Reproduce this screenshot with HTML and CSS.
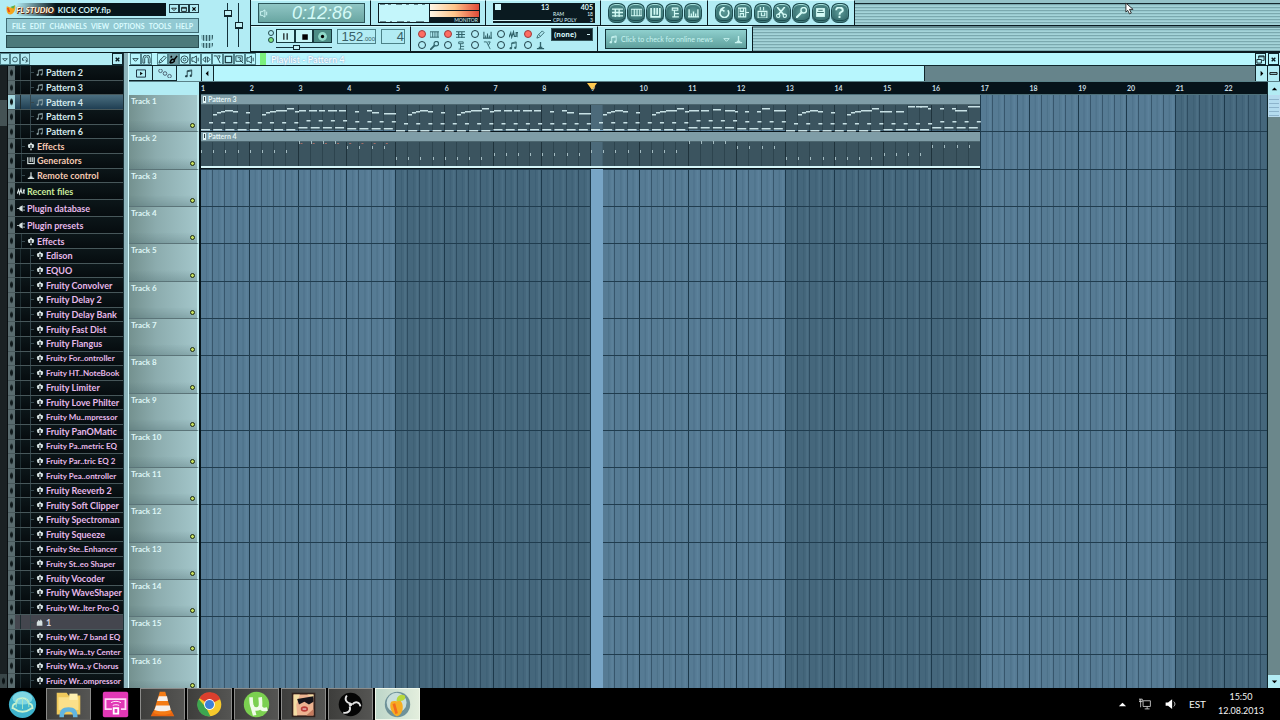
FILE: index.html
```
<!DOCTYPE html>
<html lang="en">
<head>
	<meta charset="UTF-8">
	<title>FL Studio</title>
	<link rel="stylesheet" href="styles.css">
</head>
<body>
	<svg class="symbols" aria-hidden="true">
		<symbol id="note" viewBox="0 0 10 10"><path d="M3 8V2l5-1v6M3 3l5-1" fill="none" stroke="currentColor"/><circle cx="2" cy="8" r="1.3" fill="currentColor"/><circle cx="7" cy="7.5" r="1.3" fill="currentColor"/></symbol>
		<symbol id="plug" viewBox="0 0 10 10"><path d="M4 0h2v2H4zM2 2h6l1 2-1 3H6v3H4V7H2L1 4z" fill="currentColor"/><path d="M5 3v5" stroke="#0b1216" stroke-width="1.500"/></symbol>
		<symbol id="keys" viewBox="0 0 10 10"><path d="M1 1v8h8V1M4 1v6M6.500 1v6" fill="none" stroke="currentColor" stroke-width="1.500"/></symbol>
		<symbol id="remote" viewBox="0 0 10 10"><path d="M5 1v6M1 8.500h8M3 7h4" fill="none" stroke="currentColor" stroke-width="1.500"/></symbol>
		<symbol id="wave" viewBox="0 0 10 10"><path d="M0 8l2-5 1 5 2-6 1 5h2V3h2v5" fill="none" stroke="currentColor" stroke-width="1.300"/></symbol>
		<symbol id="jack" viewBox="0 0 10 10"><path d="M0 5h4M7 3h3M7 7h3" stroke="currentColor"/><path d="M7 1v8L3 7V3z" fill="currentColor"/></symbol>
		<symbol id="hand" viewBox="0 0 10 10"><path d="M1 9V5l2-3 2 1 1-2 2 3v5z" fill="currentColor"/></symbol>
		<symbol id="down" viewBox="0 0 10 10"><path d="M2 4h6L5 7z" fill="none" stroke="currentColor"/></symbol>
		<symbol id="magnet" viewBox="0 0 10 10"><path d="M1 9V4a4 4 0 0 1 8 0v5H7V4a2 2 0 0 0-4 0v5z" fill="none" stroke="currentColor"/></symbol>
		<symbol id="pencil" viewBox="0 0 10 10"><path d="M1 9l1-3 5-5 2 2-5 5zM3 5l2 2" fill="none" stroke="currentColor"/></symbol>
		<symbol id="brush" viewBox="0 0 10 10"><path d="M9 1L6 5M1 9c1-3 2-5 4-4s1 4-4 4M3 1L2 3" fill="none" stroke="currentColor" stroke-width="1.700"/></symbol>
		<symbol id="mute" viewBox="0 0 10 10"><circle cx="5" cy="5" r="4" fill="none" stroke="currentColor"/><circle cx="5" cy="5" r="1.500" fill="none" stroke="currentColor"/></symbol>
		<symbol id="ring" viewBox="0 0 10 10"><circle cx="5" cy="5" r="3" fill="none" stroke="currentColor"/></symbol>
		<symbol id="reload" viewBox="0 0 10 10"><path d="M2 6a3 3 0 1 1 5 1h2M6 5l1 2-1 2M2 3v3h2" fill="none" stroke="currentColor"/></symbol>
		<symbol id="speaker" viewBox="0 0 10 10"><path d="M1 3h2l3-2v8L3 7H1zM8 3v4" fill="none" stroke="currentColor"/></symbol>
		<symbol id="slip" viewBox="0 0 10 10"><path d="M4 2v6L1 5zM6 2v6l3-3z" fill="none" stroke="currentColor"/></symbol>
		<symbol id="slice" viewBox="0 0 10 10"><path d="M1 1h3l4 8M5 1h3L6 5" fill="none" stroke="currentColor"/></symbol>
		<symbol id="select" viewBox="0 0 10 10"><rect x="1.500" y="1.500" width="7" height="7" fill="none" stroke="currentColor" stroke-width="1.500"/></symbol>
		<symbol id="zoomer" viewBox="0 0 10 10"><path d="M1 1h7v6H1zM5 5l4 4M3 3h3v2" fill="none" stroke="currentColor"/></symbol>
		<symbol id="cross" viewBox="0 0 10 10"><path d="M3 3l4 4M7 3L3 7" stroke="currentColor" stroke-width="1.500"/></symbol>
		<symbol id="max" viewBox="0 0 10 10"><path d="M2 3h6v5H2zM2 4h6" fill="none" stroke="currentColor"/></symbol>
		<symbol id="restore" viewBox="0 0 10 10"><path d="M1 5h5v4H1zM3 4V1h6v5H7M3 2h6" fill="none" stroke="currentColor"/></symbol>
		<symbol id="step" viewBox="0 0 10 10"><path d="M0 2h10M0 5h10M0 8h10M3 2v7M6.500 2v7" stroke="currentColor" stroke-width="1.200"/></symbol>
		<symbol id="piano" viewBox="0 0 10 10"><path d="M0 2h10v6H0zM3 2v6M5.500 2v6M8 2v6" fill="none" stroke="currentColor"/></symbol>
		<symbol id="tree" viewBox="0 0 10 10"><path d="M3 1h5v2H3zM5 3v6M5 6h4M3 9h6" fill="none" stroke="currentColor"/></symbol>
		<symbol id="mixer" viewBox="0 0 10 10"><path d="M1 9V2M3 9V6M5 9V4M7 9V6M9 9V2M0 9h10" stroke="currentColor" stroke-width="1.200"/></symbol>
		<symbol id="undo" viewBox="0 0 10 10"><path d="M3 2a4 4 0 1 0 5 1M5 0L2 2l3 2" fill="none" stroke="currentColor" stroke-width="1.500"/></symbol>
		<symbol id="disk" viewBox="0 0 10 10"><path d="M0 1h7v8H0zM2 1v3h3V1M2 9V6h3v3M7 5h3" fill="none" stroke="currentColor"/></symbol>
		<symbol id="render" viewBox="0 0 10 10"><path d="M3 0v3M6 0v3M1 4h8v6H1zM4 5v3h3V5" fill="none" stroke="currentColor"/></symbol>
		<symbol id="cut" viewBox="0 0 10 10"><path d="M1 0l6 7M8 0L2 7" stroke="currentColor" stroke-width="1.500"/><circle cx="2" cy="8" r="1.500" fill="none" stroke="currentColor"/><circle cx="8" cy="8" r="1.500" fill="none" stroke="currentColor"/></symbol>
		<symbol id="mic" viewBox="0 0 10 10"><path d="M0 10l5-5" stroke="currentColor" stroke-width="2"/><circle cx="7" cy="3" r="2.500" fill="none" stroke="currentColor" stroke-width="1.300"/></symbol>
		<symbol id="info" viewBox="0 0 10 10"><path d="M1 1h8v8H1z" fill="currentColor"/><path d="M3 3h4M2 5h6" stroke="#38706f"/></symbol>
		<symbol id="help" viewBox="0 0 10 10"><path d="M2 3c0-4 6-3 6 0 0 2-3 1-3 4M5 8v2" fill="none" stroke="currentColor" stroke-width="1.800"/></symbol>
	</svg>

	<header class="toolbar">
		<section class="main-panel">
			<div class="title">
				<svg class="fruit" viewBox="0 0 12 14"><path d="M1 3l5 2 5-3c1 6-2 11-6 11S0 7 1 3z" fill="#f5a51c"/><path d="M5 4l6-2-2 4z" fill="#54b04c"/><path d="M2 5l2 5" stroke="#e8481d" stroke-width="2"/></svg>
				<b class="brand">FL STUDIO</b>
				<span>KICK COPY.flp</span>
				<div class="win-buttons">
					<button aria-label="Minimize"><svg viewBox="0 0 10 10"><use href="#down"/></svg></button>
					<button aria-label="Restore"><svg viewBox="0 0 10 10"><use href="#max"/></svg></button>
					<button aria-label="Close"><svg viewBox="0 0 10 10"><use href="#cross"/></svg></button>
				</div>
			</div>
			<nav class="menu">
				<a href="#file">FILE</a><a href="#edit">EDIT</a><a href="#channels">CHANNELS</a><a href="#view">VIEW</a><a href="#options">OPTIONS</a><a href="#tools">TOOLS</a><a href="#help-menu">HELP</a>
			</nav>
			<div class="hint"></div>
			<div class="knobs"><i></i><i></i></div>
			<div class="main-sliders">
				<input type="range" class="vslider" aria-label="Main volume" value="80">
				<input type="range" class="vslider" aria-label="Main pitch" value="50">
			</div>
		</section>

		<div class="rows">
			<div class="row">
				<section class="panel time"><div class="lcd"><svg viewBox="0 0 10 10"><use href="#speaker"/></svg><output>0:12:86</output></div></section>
				<section class="panel scope">
					<svg viewBox="0 0 102 20" preserveAspectRatio="none">
						<defs><linearGradient id="heat"><stop offset="0" stop-color="#fff7e6"/><stop offset=".5" stop-color="#ffc58a"/><stop offset="1" stop-color="#e04a38"/></linearGradient></defs>
						<rect width="102" height="20" fill="#0b1a20"/>
						<rect x="1" y="1" width="50" height="18" fill="#c4f6fb"/>
						<path d="M2 1h5m3 0h3m5 0h6m4 0h3m5 0h4m4 0h3M2 19h6m4 0h2m5 0h7m3 0h3m6 0h8" fill="none" stroke="#0b1a20"/>
						<rect x="52" y="1" width="49" height="6" fill="url(#heat)"/>
						<rect x="52" y="8" width="49" height="6" fill="url(#heat)"/>
					</svg>
					<span class="scope-label">MONITOR</span>
				</section>
				<section class="panel meter">
					<div class="song-pos"><i></i><b>13</b></div>
					<div class="cpu"><b>405</b><span>RAM <em>18</em></span><span>CPU POLY <em>3</em></span></div>
				</section>
				<section class="panel rounds views" data-icons="step,piano,keys,tree,mixer"></section>
				<section class="panel rounds files" data-icons="undo,disk,render,cut,mic,info,help"></section>
				<div class="stripes"></div>
			</div>
			<div class="row">
				<section class="panel transport">
					<div class="mode"><i></i><i class="lit"></i></div>
					<div class="play">
						<div class="play-buttons">
							<button aria-label="Pause"><svg viewBox="0 0 10 10"><path d="M3 2h1v6H3zM6 2h1v6H6z"/></svg></button>
							<button aria-label="Stop"><svg viewBox="0 0 10 10"><path d="M3 3h5v5H3z"/></svg></button>
							<button class="rec" aria-label="Record"><svg viewBox="0 0 10 10"><circle cx="5" cy="5" r="4" fill="#8fd9c9"/><circle cx="5" cy="5" r="1.500"/></svg></button>
						</div>
						<input type="range" class="hslider" aria-label="Song position" value="34">
					</div>
					<output class="tempo">152<small>.000</small></output>
					<output class="pat">4</output>
				</section>
				<section class="panel snap">
					<div class="switches"></div>
					<select aria-label="Snap"><option>(none)</option></select>
				</section>
				<section class="panel online">
					<div class="news"><svg viewBox="0 0 10 10"><use href="#note"/></svg><span>Click to check for online news</span><svg viewBox="0 0 10 10"><use href="#down"/></svg><svg class="get" viewBox="0 0 10 10"><use href="#remote"/></svg></div>
				</section>
				<div class="stripes"></div>
			</div>
		</div>
	</header>

	<main class="desk">
		<aside class="browser">
			<div class="bar">
				<div class="tools" data-icons="down,ring,reload"></div>
				<button class="close" aria-label="Close browser"><svg viewBox="0 0 10 10"><use href="#cross"/></svg></button>
			</div>
			<div class="browser-body">
				<div class="browser-scroll"><i></i><b></b></div>
				<ul class="items"></ul>
			</div>
		</aside>

		<section class="playlist">
			<div class="bar">
				<div class="tools" data-icons="down,magnet"></div>
				<div class="tools paint" data-icons="pencil,brush,mute,speaker,slip,slice,select,zoomer,speaker"></div>
				<i class="green"></i>
				<h1>Playlist - Pattern 4</h1>
				<button class="close" aria-label="Restore playlist"><svg viewBox="0 0 10 10"><use href="#restore"/></svg></button>
				<button class="close" aria-label="Close playlist"><svg viewBox="0 0 10 10"><use href="#cross"/></svg></button>
			</div>
			<div class="sub">
				<div class="tabs">
					<button aria-label="Picker"><svg viewBox="0 0 20 10"><path d="M5 1h10v8H5z" fill="none" stroke="#123"/><path d="M9 3l3 2-3 2z"/></svg></button>
					<button aria-label="Links"><svg viewBox="0 0 20 10"><circle cx="5" cy="2" r="2" fill="none" stroke="#456"/><circle cx="10" cy="5" r="2" fill="none" stroke="#456"/><circle cx="15" cy="8" r="2" fill="none" stroke="#456"/></svg></button>
					<button aria-label="Patterns"><svg viewBox="0 0 10 10"><use href="#note"/></svg></button>
				</div>
				<div class="hscroll">
					<button aria-label="Scroll left"><svg viewBox="0 0 10 10"><path d="M6 2v6L3 5z"/></svg></button>
					<div class="rail"><i></i></div>
					<button aria-label="Scroll right"><svg viewBox="0 0 10 10"><path d="M4 2v6l3-3z"/></svg></button>
				</div>
				<button class="zoom-out" aria-label="Zoom"><svg viewBox="0 0 10 10"><path d="M1 4h8v2H1z" fill="none" stroke="#000"/></svg></button>
			</div>
			<div class="arrange">
				<ol class="tracks"></ol>
				<div class="song">
					<ol class="ruler"></ol>
					<div class="grid">
						<svg class="lanes" viewBox="0 0 1066 597" preserveAspectRatio="none"></svg>
						<span class="clip-name first">Pattern 3</span>
						<span class="clip-name second">Pattern 4</span>
					</div>
				</div>
				<div class="vscroll">
					<button aria-label="Scroll up"><svg viewBox="0 0 10 10"><path d="M2 7h6L5 4z"/></svg></button>
					<div class="rail"><i></i></div>
					<button aria-label="Scroll down"><svg viewBox="0 0 10 10"><path d="M2 4h6L5 7z"/></svg></button>
				</div>
			</div>
		</section>
	</main>

	<footer class="taskbar">
		<button class="start" aria-label="Start"><svg viewBox="0 0 32 32"><circle cx="16" cy="16" r="15" fill="#3fb3cc"/><ellipse cx="16" cy="9" rx="11" ry="7" fill="#7fd6e2"/><path d="M5 20c0-4 2-5 4-5 0-4 3-6 7-6s7 3 7 6c3 0 4 2 4 5-3 0-3 4-11 4S8 20 5 20z" fill="none" stroke="#c9f2ce" stroke-width="2"/><path d="M9 19c0-5 1-7 3-9M16 21V9M23 19c0-5-1-7-3-9" fill="none" stroke="#a9e6c4"/></svg></button>
		<button class="task" aria-label="Explorer"><svg viewBox="0 0 32 32"><path d="M3 3h11l2 3h13v21H3z" fill="#f0c95c"/><path d="M5 8h22v14H5z" fill="#fbe08a"/><path d="M17 4h9v7h-9z" fill="#fff0b0"/><path d="M6 30c0-8 3-11 10-11s10 3 10 11h-5c0-4-1-6-5-6s-5 2-5 6z" fill="#62b5e0"/></svg></button>
		<button class="task plain" aria-label="Connect"><svg viewBox="0 0 32 32"><rect x="2" y="2" width="28" height="28" rx="2" fill="#e238b6"/><path d="M12 21H5V10h22v11h-5" fill="none" stroke="#ffd8f6" stroke-width="2"/><path d="M14 20h5v6h-5z" fill="none" stroke="#fff" stroke-width="2"/><path d="M11 14c3-2 8-2 11 0M13 17c2-1 5-1 7 0" fill="none" stroke="#fff"/></svg></button>
		<button class="task" aria-label="VLC"><svg viewBox="0 0 32 32"><path d="M6 23h20l3 6H3z" fill="#e8640f"/><path d="M13 2h6l7 23c-5 3-15 3-20 0z" fill="#f47b14"/><path d="M12 7h9l1 5H10zM9 17h15l1 5c-5 2-13 2-18 0z" fill="#f4f0ec"/></svg></button>
		<button class="task" aria-label="Chrome"><svg viewBox="0 0 32 32"><circle cx="16" cy="16" r="13" fill="#f6c92c"/><path d="M16 16L5 9a13 13 0 0 1 23 1z" fill="#dc3f2e"/><path d="M4 10l8 9 5 10A13 13 0 0 1 4 10z" fill="#3da650"/><circle cx="16" cy="16" r="6" fill="#fff"/><circle cx="16" cy="16" r="5" fill="#3e80d8"/></svg></button>
		<button class="task" aria-label="uTorrent"><svg viewBox="0 0 32 32"><circle cx="16" cy="16" r="14" fill="#7bd050"/><path d="M10 8c0 9 1 13 6 13s5-4 4-13M20 17c1 5 4 5 8 4M11 17l3 11" fill="none" stroke="#effbe8" stroke-width="4"/></svg></button>
		<button class="task" aria-label="Picture"><svg viewBox="0 0 32 32"><path d="M3 3h26v27H3z" fill="#30201c"/><path d="M5 5h22v23H5z" fill="#edb391"/><path d="M5 5h7L8 16l1 12H5zM20 5h7v4z" fill="#f4dea4"/><path d="M9 10l18-3v6l-5 3-5-3-6 3z" fill="#17151b"/><ellipse cx="17" cy="21" rx="4" ry="3" fill="#b93d38"/><path d="M15 21h4" stroke="#fff"/><path d="M19 28l8-7v7z" fill="#c4795d"/></svg></button>
		<button class="task" aria-label="OBS"><svg viewBox="0 0 32 32"><circle cx="16" cy="16" r="13" fill="#050505"/><path d="M16 15c-5-1-7-5-4-9M18 16c3-4 8-3 9 2M15 18c2 5-2 8-7 7" fill="none" stroke="#e4e4e4" stroke-width="2"/><circle cx="16" cy="16" r="2" fill="#e4e4e4"/></svg></button>
		<button class="task active" aria-label="FL Studio"><svg viewBox="0 0 32 32"><circle cx="16" cy="16" r="14" fill="#6f9299"/><circle cx="15" cy="14" r="11" fill="#c8dedb"/><path d="M9 13c4-2 6 1 9-2 6 3 5 17-3 18-5-2-9-11-6-16z" fill="#f6ad22"/><path d="M12 15l3 11" stroke="#f36c1e" stroke-width="3"/><path d="M15 12c0-5 4-8 9-6 2 4-2 7-9 6z" fill="#b9d83b"/></svg></button>
		<div class="tray">
			<svg viewBox="0 0 10 10"><path d="M1 7h8L5 3z" fill="#fff"/></svg>
			<svg class="net" viewBox="0 0 16 14"><path d="M5 3h9v7H5zM7 13h6M10 10v3M2 1v10M0 1h4v3H0z" fill="none" stroke="#ddd"/></svg>
			<svg class="net" viewBox="0 0 16 14"><path d="M2 5h3l5-4v12L5 9H2z" fill="#fff"/><path d="M12 4c2 2 2 4 0 6" fill="none" stroke="#ddd"/></svg>
			<span>EST</span>
			<time datetime="2013-08-12T15:50">15:50<br>12.08.2013</time>
		</div>
	</footer>
	<svg class="cursor" viewBox="0 0 10 14"><path d="M1 1v10l2-2 2 4 2-1-2-4h4z" fill="#fff" stroke="#222"/></svg>
	<script src="script.js"></script>
</body>
</html>
```
FILE: styles.css
```
*{
	margin: 0;
	padding: 0;
	box-sizing: border-box;
}
body{
	height: 100vh;
	display: flex;
	flex-direction: column;
	overflow: hidden;
	background: #000;
	font-family: Lato, sans-serif;
	font-size: 9px;
}
button{
	border: 0;
	background: none;
	display: flex;
	align-items: center;
	justify-content: center;
	color: #24434b;
}
ul,ol{
	list-style: none;
}
.symbols{
	display: none;
}

/* toolbar */
.toolbar{
	flex: none;
	height: 53px;
	display: flex;
	background: #b2ecf4;
	border-bottom: 1px solid #0a1a20;
}
.main-panel{
	width: 251px;
	flex: none;
	padding: 3px 6px;
	display: grid;
	grid-template-columns: 193px 12px 1fr;
	grid-template-rows: 13px 15px 13px;
	row-gap: 2px;
	column-gap: 2px;
	border-right: 1px solid #0a1a20;
}
.title,.menu,.hint{
	grid-column: 1;
}
.title{
	display: flex;
	align-items: center;
	color: #cfeef2;
	font-size: 8px;
	font-weight: bold;
	background: linear-gradient(90deg, #b2ecf4 10px, #07151a 50px);
}
.title>span{
	flex: 1;
	margin-left: 4px;
}
.fruit{
	width: 10px;
	height: 13px;
}
.brand{
	font-style: italic;
	font-size: 8px;
	color: #fdf4dc;
	text-shadow: 0 0 1px #5b2610, 1px 1px 0 #5b2610;
}
.win-buttons{
	display: flex;
	height: 13px;
	padding: 1px 0 3px 3px;
	background: #b2ecf4;
}
.win-buttons button{
	width: 10px;
	border: 1px solid #1d3a42;
	color: #000;
}
.win-buttons svg{
	width: 8px;
	height: 8px;
}
.menu{
	display: flex;
	align-items: center;
	justify-content: space-between;
	padding: 0 5px;
	background: #92c9d2;
	border: 1px solid #3f6d76;
}
.menu a{
	color: #dafcff;
	text-decoration: none;
	font-size: 7px;
	font-weight: bold;
}
.hint{
	background: #4c7a7b;
	border: 1px solid #264b50;
}
.knobs{
	grid-column: 2;
	grid-row: 3;
	display: flex;
	flex-direction: column;
	gap: 2px;
}
.knobs i{
	height: 6px;
	border-radius: 0 0 4px 4px;
	background: repeating-linear-gradient(90deg, #8fc4cb 0 2px, #345f67 2px 3px);
}
.main-sliders{
	grid-column: 3;
	grid-row: 1 / 4;
	display: flex;
	justify-content: space-between;
	padding: 0 1px 0 8px;
}
.vslider,.hslider{
	appearance: none;
	background: none;
}
.vslider{
	writing-mode: vertical-lr;
	direction: rtl;
	width: 9px;
	height: 44px;
	background: linear-gradient(#14323a, #14323a) center / 1px 100% no-repeat;
}
.vslider::-webkit-slider-thumb{
	appearance: none;
	width: 8px;
	height: 7px;
	background: #c3f2f6;
	border: 1px solid #12282e;
	border-bottom-width: 2px;
}
.rows{
	flex: 1;
	min-width: 0;
}
.row{
	display: flex;
	height: 26px;
	border-bottom: 1px solid #0a1a20;
}
.panel{
	flex: none;
	display: flex;
	align-items: center;
	padding: 0 5px 0 7px;
	border-right: 1px solid #0a1a20;
	border-top: 1px solid #d4fbff;
}
.stripes{
	flex: 1;
	background: repeating-linear-gradient(#a5d4d9 0 1px, #7ba9af 1px 2px, #9acad0 2px 3px);
	border-top: 2px solid #638a90;
}
.row:first-child .stripes{
	border-top: 3px solid #94c2c8;
	box-shadow: inset 0 1px #14282e;
}
.time{
	width: 120px;
}
.lcd{
	flex: 1;
	height: 20px;
	display: flex;
	align-items: center;
	background: linear-gradient(#90c6c5, #69a6a2);
	border: 1px solid #2c565a;
	color: #d4fbf8;
}
.lcd svg{
	width: 10px;
	height: 9px;
}
.lcd output{
	flex: 1;
	padding-left: 23px;
	font: italic 18px/18px "Liberation Sans", sans-serif;
}
.scope{
	width: 115px;
	position: relative;
}
.scope>svg{
	width: 100%;
	height: 20px;
}
.scope-label{
	position: absolute;
	right: 7px;
	bottom: 2px;
	font-size: 5px;
	color: #cdeff2;
}
.meter{
	width: 115px;
	color: #dff8fa;
	line-height: 7px;
}
.song-pos{
	flex: 1;
	height: 20px;
	display: flex;
	justify-content: space-between;
	background: #0a1a20;
	border-bottom: 2px solid #0a1a20;
	padding: 1px 2px;
	box-shadow: inset 0 -1px #cdeff2;
}
.song-pos i{
	width: 6px;
	height: 6px;
	background: #cdf6fa;
}
.song-pos b{
	font-size: 7px;
}
.cpu{
	width: 44px;
	height: 20px;
	padding: 0 2px;
	background: #0a1a20;
	font-size: 5px;
	text-align: right;
}
.cpu b,.cpu span{
	display: block;
	height: 6px;
	line-height: 6px;
}
.cpu b{
	height: 8px;
	line-height: 8px;
	font-size: 7px;
}
.cpu span{
	display: flex;
	justify-content: space-between;
}
.cpu em{
	font-style: normal;
}
.rounds{
	justify-content: space-between;
}
.views{
	width: 107px;
}
.files{
	width: 147px;
}
.rounds button{
	width: 18px;
	height: 20px;
	border-radius: 7px;
	border: 1px solid #1d4c50;
	border-bottom: 3px double #1d4c50;
	background: radial-gradient(#5c9b98, #2c6466);
	box-shadow: inset 0 1px 1px #aee9e4;
	color: #d3fbf6;
}
.rounds svg{
	width: 11px;
	height: 11px;
}
.transport{
	width: 160px;
	gap: 5px;
	padding-left: 17px;
}
.mode i{
	display: block;
	width: 6px;
	height: 6px;
	margin: 1px 0;
	border: 1px solid #234a4d;
	border-radius: 50%;
}
.mode .lit{
	background: #7ee37b;
}
.mode{
	margin-right: -3px;
	margin-bottom: 5px;
}
.play{
	width: 56px;
}
.play-buttons{
	display: flex;
}
.play-buttons button{
	flex: 1;
	height: 14px;
	margin-top: 2px;
	background: #c5f5f6;
	border: 1px solid #16383d;
}
.play-buttons .rec{
	background: #4d8d86;
}
.play-buttons svg{
	width: 11px;
	height: 11px;
}
.hslider{
	display: block;
	width: 56px;
	height: 8px;
	background: linear-gradient(#14323a, #14323a) center / 100% 1px no-repeat;
}
.hslider::-webkit-slider-thumb{
	appearance: none;
	width: 7px;
	height: 5px;
	background: #c3f2f6;
	border: 1px solid #12282e;
}
.tempo,.pat{
	height: 15px;
	margin-bottom: 6px;
	border: 1px solid #4c8288;
	text-align: right;
	font: 13px/13px "Liberation Sans", sans-serif;
	color: #386067;
}
.tempo{
	width: 39px;
}
.tempo small{
	font-size: 6px;
}
.pat{
	width: 24px;
}
.snap{
	width: 187px;
	gap: 1px;
	padding-right: 4px;
	align-items: flex-start;
}
.switches{
	flex: 1;
	display: grid;
	grid-template-columns: repeat(5, 1fr);
	row-gap: 1px;
	padding-top: 2px;
}
.switches label{
	display: flex;
	align-items: center;
	gap: 2px;
	height: 10px;
	color: #30636a;
}
.switches input{
	appearance: none;
	width: 8px;
	height: 8px;
	border: 1px solid #1e3f47;
	border-radius: 50%;
}
.switches input:checked{
	background: #ff6d62;
	border-color: #a03a3c;
}
.switches svg{
	width: 13px;
	height: 9px;
}
.snap select{
	appearance: none;
	width: 42px;
	height: 13px;
	margin-top: 1px;
	padding-left: 2px;
	border: 1px solid #35555a;
	font: bold 7px "Open Sans", sans-serif;
	color: #d8f7fa;
	background: linear-gradient(#d8f7fa, #d8f7fa) 35px 5px / 3px 1px no-repeat #0a1a20;
}
.online{
	width: 155px;
}
.news{
	flex: 1;
	min-width: 0;
	height: 20px;
	display: flex;
	align-items: center;
	gap: 3px;
	padding: 0 3px;
	background: linear-gradient(#8fd0ce, #5fa09d);
	border: 1px solid #14343a;
	color: #c8f4f1;
	font-size: 7px;
}
.news span{
	flex: 1;
	white-space: nowrap;
}
.news svg{
	flex: none;
	width: 9px;
	height: 9px;
}

/* windows */
.desk{
	flex: 1;
	min-height: 0;
	display: flex;
	background: #8db4bb;
}
.bar{
	flex: none;
	height: 13px;
	display: flex;
	align-items: center;
	gap: 2px;
	background: #b7f6fd;
	border-bottom: 1px solid #10262c;
}
.tools{
	display: flex;
}
.tools button,.close{
	width: 11px;
	height: 12px;
	border: 1px solid #53868e;
}
.tools svg,.close svg{
	width: 9px;
	height: 9px;
}
.close{
	border-color: #10262c;
	color: #0a1a20;
}
.browser{
	width: 124px;
	flex: none;
	display: flex;
	flex-direction: column;
	border-right: 1px solid #1b3239;
}
.browser .bar{
	justify-content: space-between;
	background: #b2ecf4;
}
.browser .tools button{
	width: 10px;
}
.browser-body{
	flex: 1;
	min-height: 0;
	display: flex;
	overflow: hidden;
	background: #0d1518;
}
.browser-scroll{
	width: 8px;
	padding-top: 34px;
	background: #1a2123;
	border-right: 1px solid #090e10;
	display: flex;
	flex-direction: column;
	justify-content: space-between;
}
.browser-scroll i{
	height: 26px;
	background: #445254;
}
.browser-scroll b{
	height: 14px;
	background: radial-gradient(#0b1214 1px, transparent 2px), #394648;
}
.items{
	flex: 1;
	min-width: 0;
	margin-bottom: -1px;
	display: flex;
	flex-direction: column;
	font-weight: bold;
}
.items li{
	flex: 40 1 0;
	min-height: 0;
	display: flex;
	align-items: center;
	border-bottom: 1px solid #47575a;
	background: linear-gradient(#0c1619, #060c0f);
	color: #e6b9ea;
	white-space: nowrap;
}
.items li.big{
	flex-grow: 47;
}
.items li.tight{
	font-size: 8px;
}
.items li::before{
	content: "";
	flex: none;
	width: 7px;
	height: 100%;
	background: radial-gradient(#101a1c 1px, transparent 2px) center, #5a6c6f;
	margin-right: 1px;
}
.items .indent{
	flex: none;
	height: 100%;
}
.items .lvl0{
	width: 0;
}
.items .lvl1{
	width: 10px;
	background: linear-gradient(#2a3b40, #2a3b40) 5px 0 / 1px 100% no-repeat, linear-gradient(#35474d, #35474d) 6px center / 3px 1px no-repeat;
}
.items .lvl2{
	width: 19px;
	background: linear-gradient(#1e2d31, #1e2d31) 4px 0 / 1px 100% no-repeat, linear-gradient(#35474d, #35474d) 14px 0 / 1px 100% no-repeat, linear-gradient(#35474d, #35474d) 15px center / 3px 1px no-repeat;
}
.items svg{
	flex: none;
	width: 8px;
	height: 9px;
	margin: 0 2px 0 1px;
	color: #d6e2e2;
}
.items .music{
	color: #d6ebee;
}
.items .orange{
	color: #f5c9b2;
}
.items .green-text{
	color: #c8eb9b;
}
.items li.chosen{
	background: linear-gradient(#4b6f80, #203f53);
}
.items li.chosen::before{
	background-color: #a5d8e0;
}
.items li.folder{
	background: #44464e;
	color: #d9d6e2;
}
.items svg.note{
	color: #8ea3a6;
}

/* playlist */
.playlist{
	flex: 1;
	min-width: 0;
	margin-left: 4px;
	display: flex;
	flex-direction: column;
	border-left: 1px solid #d4fbff;
}
.playlist .bar{
	padding-right: 1px;
}
.playlist .tools{
	margin-left: 1px;
}
.playlist .paint{
	margin-left: 3px;
}
.paint button:nth-child(2){
	background: #6f9aa1;
	color: #000;
}
.green{
	width: 6px;
	height: 12px;
	margin: 0 3px 0 2px;
	background: #7bf07c;
}
.bar h1{
	flex: 1;
	font-size: 9px;
	color: #f2feff;
	text-shadow: 0 0 1px #7f9fc4, 0 0 2px #a9b9e4;
}
.sub{
	flex: none;
	height: 16px;
	display: flex;
	background: #b2ecf4;
	border-bottom: 1px solid #5a8188;
}
.tabs{
	width: 72px;
	display: flex;
}
.tabs button{
	flex: 1;
	border-right: 1px solid #10262c;
	border-bottom: 1px solid #10262c;
}
.tabs button:last-child{
	border-color: transparent;
}
.tabs svg{
	width: 18px;
	height: 9px;
}
.hscroll{
	flex: 1;
	display: flex;
	border-left: 1px solid #10262c;
}
.hscroll button,.zoom-out{
	width: 12px;
	border-right: 1px solid #10262c;
}
.hscroll svg,.zoom-out svg,.vscroll svg{
	width: 9px;
	height: 9px;
}
.hscroll .rail{
	flex: 1;
	display: flex;
	background: #66848b;
	border-right: 1px solid #10262c;
}
.hscroll .rail i{
	flex: 71;
	background: #b7f6fd;
	border-right: 1px solid #10262c;
}
.hscroll .rail::after{
	content: "";
	flex: 33;
}
.arrange{
	flex: 1;
	min-height: 0;
	display: flex;
}
.tracks{
	width: 72px;
	flex: none;
	padding-top: 13px;
	background: #b2ecf4;
	display: flex;
	flex-direction: column;
	margin-bottom: -4px;
	border-right: 2px solid #07151b;
}
.tracks li{
	flex: 1;
	min-height: 0;
	display: flex;
	justify-content: space-between;
	padding: 1px 2px;
	border-right: 2px solid #bfe7ea;
	border-bottom: 1px solid #5b7478;
	background: linear-gradient(transparent 70%, rgba(60,90,95,.25)), linear-gradient(90deg, #74918f, #8cacae 40%, #a3c6ca);
	color: #dff7f7;
	font-weight: bold;
	font-size: 8px;
}
.tracks i{
	align-self: flex-end;
	width: 5px;
	height: 5px;
	margin-bottom: 2px;
	border: 1px solid #1d2b14;
	border-radius: 50%;
	background: #c5de5c;
}
.song{
	flex: 1;
	min-width: 0;
	display: flex;
	flex-direction: column;
	overflow: hidden;
}
.ruler{
	flex: none;
	height: 13px;
	display: flex;
	background: #06131a;
	border-bottom: 1px solid #4d707a;
	color: #c8dde2;
	font-size: 7px;
	font-weight: bold;
	line-height: 12px;
}
.ruler li{
	flex: none;
	width: 4.573%;
	position: relative;
}
.ruler .now::before{
	content: "";
	position: absolute;
	left: -4px;
	top: 1px;
	border: 5px solid transparent;
	border-top: 7px solid #ffc94f;
}
.grid{
	flex: 1;
	min-height: 0;
	margin-bottom: -4px;
	position: relative;
}
.lanes{
	display: block;
	width: 100%;
	height: 100%;
}
.clip-name{
	position: absolute;
	left: 7px;
	color: #e3f5f6;
	font-size: 7px;
	font-weight: bold;
	line-height: 9px;
}
.first{
	top: 0;
}
.second{
	top: 37px;
}
.vscroll{
	width: 13px;
	display: flex;
	flex-direction: column;
	border-left: 1px solid #10262c;
}
.vscroll button{
	height: 13px;
	background: #b2ecf4;
}
.vscroll .rail{
	flex: 1;
	background: #6b878b;
}
.vscroll .rail i{
	display: block;
	height: 22px;
	border: 1px solid #b9dbef;
	background: repeating-linear-gradient(#b4dcef 0 3px, #8db4cc 3px 4px);
}

/* taskbar */
.taskbar{
	flex: none;
	height: 32px;
	display: flex;
	gap: 2px;
	background: #000;
}
.start{
	width: 44px;
}
.start svg,.task svg{
	width: 29px;
	height: 29px;
}
.task{
	width: 45px;
	border: 1px solid #8b8b89;
	border-bottom-color: #5b5b59;
	background: linear-gradient(90deg, #3e3e3c, #555553);
}
.task.plain{
	background: none;
	border-color: transparent;
}
.task.active{
	background: linear-gradient(90deg, #bdd6c9, #e3eedd);
	border-color: #eff7ea;
}
.tray{
	margin-left: auto;
	display: flex;
	align-items: center;
	gap: 12px;
	padding-right: 16px;
	color: #f2f2f2;
	font-size: 10px;
}
.tray svg{
	width: 9px;
	height: 9px;
}
.tray .net{
	width: 13px;
	height: 12px;
}
.tray time{
	font-size: 9px;
	line-height: 14px;
	text-align: center;
}
.cursor{
	position: absolute;
	left: 1125px;
	top: 2px;
	width: 9px;
	height: 13px;
}
```
FILE: script.js
```
// icon strips
function icon(name) {
	return '<svg viewBox="0 0 10 10"><use href="#' + name + '"/></svg>';
}
document.querySelectorAll("[data-icons]").forEach(function (box) {
	box.dataset.icons.split(",").forEach(function (name) {
		box.innerHTML += '<button aria-label="' + name + '">' + icon(name) + '</button>';
	});
});

// recording switches, lit ones are on
var switches = [["piano", 1], ["step", 1], ["mixer", 0], ["wave", 0], ["pencil", 1],
	["mic", 0], ["tree", 0], ["slice", 0], ["note", 0], ["remote", 0]];
document.querySelector(".switches").innerHTML = switches.map(function (s) {
	return '<label><input type="checkbox" aria-label="' + s[0] + '"' + (s[1] ? " checked" : "") + '>' + icon(s[0]) + '</label>';
}).join("");

// browser: text, level, icon, class
var items = [
	["Pattern 2", 2, "note", "music"], ["Pattern 3", 2, "note", "music"], ["Pattern 4", 2, "note", "music chosen"],
	["Pattern 5", 2, "note", "music"], ["Pattern 6", 2, "note", "music"],
	["Effects", 1, "plug", "orange"], ["Generators", 1, "keys", "orange"], ["Remote control", 1, "remote", "orange"],
	["Recent files", 0, "wave", "big green-text"], ["Plugin database", 0, "jack", "big"], ["Plugin presets", 0, "jack", "big"],
	["Effects", 1, "plug", ""]
];
["Edison", "EQUO", "Fruity Convolver", "Fruity Delay 2", "Fruity Delay Bank", "Fruity Fast Dist", "Fruity Flangus",
	"Fruity For..ontroller", "Fruity HT..NoteBook", "Fruity Limiter", "Fruity Love Philter", "Fruity Mu..mpressor",
	"Fruity PanOMatic", "Fruity Pa..metric EQ", "Fruity Par..tric EQ 2", "Fruity Pea..ontroller", "Fruity Reeverb 2",
	"Fruity Soft Clipper", "Fruity Spectroman", "Fruity Squeeze", "Fruity Ste..Enhancer", "Fruity St..eo Shaper",
	"Fruity Vocoder", "Fruity WaveShaper", "Fruity Wr..lter Pro-Q", "1", "Fruity Wr..7 band EQ", "Fruity Wra..ty Center",
	"Fruity Wra..y Chorus", "Fruity Wr..ompressor"].forEach(function (name) {
	// shortened names fill the whole column, so they are set smaller
	var cls = name == "1" ? "folder" : name.indexOf("..") > 0 ? "tight" : "";
	items.push([name, 2, name == "1" ? "hand" : "plug", cls]);
});
document.querySelector(".items").innerHTML = items.map(function (it) {
	return '<li class="' + it[3] + '"><span class="indent lvl' + it[1] + '"></span><svg class="' + it[2] +
		'" viewBox="0 0 10 10"><use href="#' + it[2] + '"/></svg><span>' + it[0] + '</span></li>';
}).join("");

var tracks = "", ruler = "", i;
for (i = 1; i <= 16; i++) {
	tracks += '<li><span>Track ' + i + '</span><i></i></li>';
}
for (i = 1; i <= 22; i++) {
	ruler += '<li' + (i == 9 ? ' class="now"' : '') + '>' + i + '</li>';
}
document.querySelector(".tracks").innerHTML = tracks;
document.querySelector(".ruler").innerHTML = ruler;

// song grid
var BAR = 48.75, BEAT = BAR / 4, LANE = 597 / 16;
var out = "";
function rect(x, y, w, h, fill) {
	out += '<rect x="' + x + '" y="' + y + '" width="' + w + '" height="' + h + '" fill="' + fill + '"/>';
}
var b, n;
for (b = 0; b < 22; b++) {
	rect(b * BAR, 0, BAR + 1, 597, Math.floor(b / 4) % 2 ? "#45677c" : "#567b94");
}
for (n = 0; n < 88; n++) {
	rect(n * BEAT + 5, 0, 1, 597, "rgba(30,60,80,.15)");
	rect(n * BEAT + 8, 0, 2, 597, "rgba(130,170,195,.12)");
	rect(Math.round(n * BEAT) - 1, 0, 1, 597, n % 4 ? "rgba(24,50,68,.5)" : "#1d394b");
}
for (i = 1; i < 16; i++) {
	rect(0, Math.round(i * LANE) - 1, 1066, 1, "#203c4e");
}
rect(390, 0, 12, 597, "#78a5c6");

// clips
function clip(y) {
	rect(0, y, 779, 9, "#7f9da7");
	rect(0, y + 9, 779, 1, "#4c666f");
	rect(0, y + 10, 779, 25, "#3b545f");
	for (n = 1; n < 64; n++) {
		rect(Math.round(n * BEAT) - 1, y + 10, 1, 25, n % 4 ? "rgba(20,40,50,.35)" : "#1f333c");
	}
	rect(390, y + 10, 12, 25, "rgba(110,150,175,.35)");
	rect(2, y + 1, 3, 7, "#e3f5f6");
	rect(3, y + 2, 1, 4, "#26383f");
}
clip(0);
clip(37);
rect(0, 36, 779, 1, "#0a161c");
rect(0, 71, 779, 2, "#d5f6f8");
rect(0, 73, 779, 1, "#0a161c");

// melody of one phrase: start, y, length
var lead = [[12, 20, 4], [16, 18, 4], [20, 17, 4], [24, 16, 8], [32, 17, 5], [45, 18, 4],
	[61, 20, 4], [65, 18, 4], [69, 17, 6], [75, 16, 11], [86, 14, 7], [94, 17, 4]];
var tail = [[98, 16, 7], [108, 16, 8], [118, 16, 6], [127, 16, 9], [138, 16, 7], [154, 17, 4], [166, 16, 5], [171, 18, 7], [183, 19, 12]];
var tail3 = [[98, 16, 10], [110, 16, 8], [122, 15, 8], [134, 16, 10], [144, 17, 3], [154, 17, 4], [166, 17, 4], [171, 14, 8], [183, 16, 12]];
var tail4 = [[98, 17, 8], [110, 17, 8], [122, 12, 7], [130, 12, 6], [134, 12, 8], [142, 14, 3], [154, 14, 4], [166, 14, 4], [169, 16, 12], [182, 12, 12]];
[tail, tail, tail3, tail4].forEach(function (end, p) {
	lead.concat(end).forEach(function (m) {
		rect(p * BAR * 4 + m[0], m[1] - 1, m[2], 1.500, "#c9e2e6");
	});
});

// bass line and hits, one height for each bar
var low = [34, 34, 32, 33, 35, 35, 34, 34, 34, 34, 32, 33, 35, 35, 34, 32];
var high = [28, 28, 26, 27, 29, 29, 29, 29, 28, 28, 26, 27, 29, 29, 29, 27];
var hits = [55, 55, 46, 51, 62, 62, 58, 58, 55, 55, 46, 51, 62, 62, 58, 50];
for (n = 0; n < 64; n++) {
	b = Math.floor(n / 4);
	rect(n * BEAT, low[b], 9, 1.500, "#c9e2e6");
	rect(n * BEAT + 8, high[b] - 1, 4, 1.500, "#c9e2e6");
	rect(Math.round(n * BEAT), hits[b], 1, 3, "#a3bbc1");
}
for (n = 8; n < 16; n++) {
	rect(n * BEAT + 2, 48, 2, 1, "#a36c66");
}
document.querySelector(".lanes").innerHTML = out;
```
